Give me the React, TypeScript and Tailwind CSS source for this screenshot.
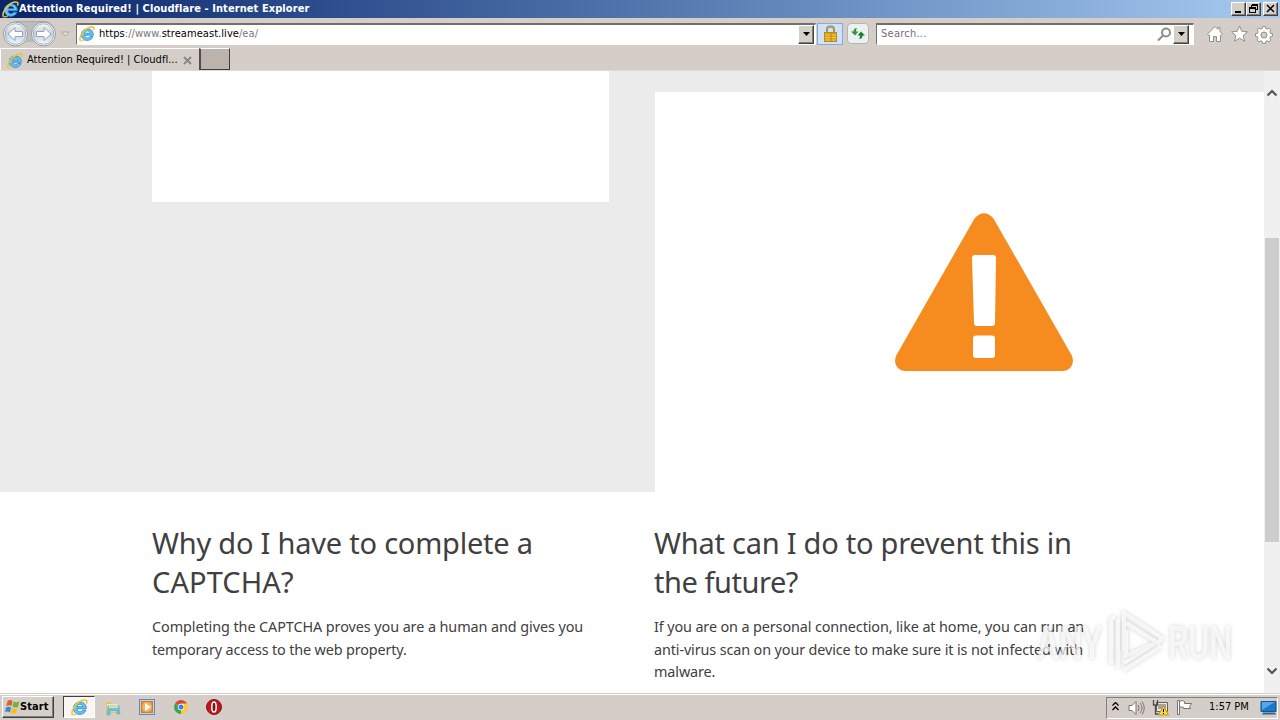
import type { ReactNode } from 'react';

const raised = 'border border-t-white border-l-white border-r-[#404040] border-b-[#404040] shadow-[inset_-1px_-1px_0_#808080] bg-[#d4d0c8]';

function IeIcon({ size = 16 }: { size?: number }) {
  return (
    <svg width={size} height={size} viewBox="0 0 16 16" className="shrink-0">
      <path d="M14.300 9.200H5.600c.1 3.300 4.200 3.600 5.300 1.400h3.100C12 16.300 2.300 15.600 2.300 8.700 2.300 1 15 .8 14.300 9.200zM5.700 7.200h5.500c-.2-3.100-5.200-3.100-5.500 0z" fill="#6cc4f2" stroke="#2688cb" strokeWidth=".8" />
      <path d="M1.500 14.800C-.8 12 4.500 3.200 11 1.200 14.300.2 15.700 1.600 14.500 4.300" fill="none" stroke="#edc52f" strokeWidth="1.500" />
      <path d="M1.500 14.800c1 .5 2.800-.2 4-1" fill="none" stroke="#f1cf49" strokeWidth="1.200" />
    </svg>
  );
}

function DropButton() {
  return (
    <div className={`flex h-[19px] w-4 shrink-0 items-center justify-center ${raised}`}>
      <svg width="7" height="4" viewBox="0 0 7 4"><path d="M0 0h7L3.500 4z" fill="#000" /></svg>
    </div>
  );
}

function WindowButton({ children }: { children: ReactNode }) {
  return (
    <div className={`flex h-[14px] w-[15px] items-center justify-center ${raised}`}>
      <svg width="11" height="10" viewBox="0 0 11 10" className="shrink-0" fill="none" stroke="#000" shapeRendering="crispEdges">{children}</svg>
    </div>
  );
}

function TitleBar() {
  return (
    <div className="flex h-[18px] shrink-0 items-center bg-linear-to-r from-[#0a246a] to-[#a6caf0] pl-[2px] pr-[2px]">
      <IeIcon size={17} />
      <span className="mt-[1px] whitespace-nowrap font-['DejaVu_Sans_Condensed','DejaVu_Sans',sans-serif] text-[11px] font-bold tracking-[0.080px] text-white">
        Attention Required! | Cloudflare - Internet Explorer
      </span>
      <div className="ml-auto flex">
        <WindowButton><path d="M2 7.500h6M2 8.500h6" /></WindowButton>
        <WindowButton><path d="M4 1.500h5M4 .5h5M3.500 1v2M9.500 0v6M8 5.500h1M1 3.500h6M1 4.500h6M1.500 4v5M7.500 3v6M1 8.500h6" /></WindowButton>
        <div className="ml-[2px]">
          <WindowButton><path d="M2 1l7 7M9 1L2 8" strokeWidth="1.500" shapeRendering="auto" /></WindowButton>
        </div>
      </div>
    </div>
  );
}

function NavButtons() {
  return (
    <svg width="74" height="30" viewBox="0 0 74 30" className="-my-1 shrink-0">
      <defs>
        <linearGradient id="orb" x1="0" y1="0" x2="0" y2="1">
          <stop offset="0" stopColor="#f5f7fa" />
          <stop offset=".5" stopColor="#c5cfdc" />
          <stop offset="1" stopColor="#eef9ff" />
        </linearGradient>
      </defs>
      <path d="M15 2.500h29c5 0 9 3 10 7" fill="none" stroke="#aaa7a4" />
      <path d="M16 3h28v22q-14-4-28 0z" fill="#bdbcbc" />
      {[15.500, 43.500].map((cx) => (
        <g key={cx}>
          <circle cx={cx} cy="15" r="12" fill="#f8f9fb" stroke="#92999f" />
          <circle cx={cx} cy="15" r="10.300" fill="url(#orb)" stroke="#9fb0c2" />
        </g>
      ))}
      <path d="M8 15l7-6.500v4h7.500v5H15v4z" fill="#fff" stroke="#98a3b0" />
      <path d="M51 15l-7-6.500v4h-7.500v5H44v4z" fill="#fff" stroke="#98a3b0" />
      <path d="M61.500 13h7.500L65.300 17z" fill="#e4e1de" stroke="#aaa6a2" />
    </svg>
  );
}

function Toolbar() {
  return (
    <div className="flex h-[30px] shrink-0 items-center pt-[1px]">
      <NavButtons />
      <div className="ml-[2px] flex h-[22px] w-[740px] items-center border border-t-2 border-[#716f6b] border-r-white border-b-white bg-white pl-[2px] pr-[1px] font-['DejaVu_Sans_Condensed','DejaVu_Sans',sans-serif] text-[11px]">
        <IeIcon />
        <span className="ml-[4px] whitespace-nowrap tracking-[0.060px] text-[#777]">
          <span className="text-black">https</span>://www.<span className="text-black">streameast.live</span>/ea/
        </span>
        <div className="ml-auto"><DropButton /></div>
      </div>
      <div className="ml-[1px] flex h-[22px] w-[26px] items-center justify-center border border-[#83acd8] bg-[#cfe2fa]">
        <svg width="15" height="17" viewBox="0 0 15 17">
          <path d="M4 8V4.500q0-3 3.500-3T11 4.500V8" fill="none" stroke="#897647" strokeWidth="2" />
          <path d="M4 8V4.500q0-3 3.500-3T11 4.500V8" fill="none" stroke="#d6c38d" strokeWidth=".8" />
          <rect x="1.500" y="7.500" width="12" height="9" fill="#d9a218" stroke="#b98a20" />
          <path d="M2 10h11M2 12.500h11M2 15h11" stroke="#f5c849" />
          <path d="M8 8v8" stroke="#bb8210" />
        </svg>
      </div>
      <div className="ml-1 flex h-[21px] w-[22px] items-center justify-center rounded-sm border border-[#b4b5b5] bg-[#edf0f0]">
        <svg width="16" height="15" viewBox="0 0 16 15" className="shrink-0">
          <path d="M7 2Q3.500 2 3.500 5.500H1L5 9.500l3.500-4H6Q6 3 7 2z" fill="#299b34" />
          <path d="M9 13q3.500 0 3.500-3.500H15L11 5.500 7.500 9.500H10Q10 12 9 13z" fill="#14802b" />
        </svg>
      </div>
      <div className="ml-[7px] flex h-[22px] w-[318px] items-center border border-t-2 border-[#716f6b] border-r-white border-b-white bg-white pl-1 pr-[4px] font-['DejaVu_Sans_Condensed','DejaVu_Sans',sans-serif] text-[11px] text-[#717171]">
        <span className="tracking-[0.250px]">Search...</span>
        <svg width="15" height="15" viewBox="0 0 15 15" className="ml-auto" fill="none" stroke="#8c8c8c" strokeWidth="2">
          <circle cx="9" cy="5.500" r="4" />
          <path d="M6 8.500L1 13.500" />
        </svg>
        <div className="ml-[1px]"><DropButton /></div>
      </div>
      <svg width="75" height="22" viewBox="0 0 75 22" className="mt-[1px] ml-[10px] shrink-0" fill="#fff" stroke="#928e8a">
        <path d="M3.500 11L11 3.500l3 3V4.500h2v4L18.500 11l-1.500 1.500-.5-.5v6.500h-4v-5h-3v5h-4V12l-.5.500z" />
        <path d="M35.500 3l2.300 5.300 5.700.5-4.300 3.800 1.300 5.600-5-3-5 3 1.300-5.600-4.300-3.800 5.700-.5z" />
        <path fillRule="evenodd" d="M58.600 3.500h2.800l.4 2 1.400.6 1.800-1.100 2 2-1.200 1.700.6 1.500 2 .4v2.800l-2 .4-.6 1.400 1.200 1.800-2 2-1.800-1.200-1.400.6-.4 2h-2.800l-.4-2-1.500-.6-1.700 1.200-2-2 1.100-1.800-.6-1.400-2-.4v-2.800l2-.4.6-1.500L53 7l2-2 1.700 1.100 1.500-.6zM60 9a3 3 0 100 6 3 3 0 000-6z" />
      </svg>
    </div>
  );
}

function TabRow() {
  return (
    <div className="flex h-[23px] shrink-0 border-b border-[#dedbd6]">
      <div className="flex w-[199px] items-center border-t border-l border-white pl-[6px] pt-[2px] font-['DejaVu_Sans_Condensed','DejaVu_Sans',sans-serif] text-[11px]">
        <IeIcon />
        <span className="ml-[4px] whitespace-nowrap tracking-[0.010px]">Attention Required! | Cloudfl...</span>
        <svg width="9" height="9" viewBox="0 0 9 9" className="ml-[5px] shrink-0"><path d="M1 1l7 7M8 1L1 8" stroke="#8c8783" strokeWidth="2" /></svg>
      </div>
      <div className="h-[22px] w-[31px] border border-t-white border-r-[#403c3a] border-b-[#403c3a] border-l-2 border-l-[#504c49] bg-[#bab3ae]" />
    </div>
  );
}

function WarningIcon() {
  return (
    <svg width="178" height="158" viewBox="0 0 178 158">
      <path d="M79.500 5.500Q89-5 98.500 5.500L176.500 142c4 8-1 16-9 16H10.500c-8 0-13-8-9-16z" fill="#f68b1f" />
      <path d="M80 42h18q3 0 3 3l-1 65q0 3-3 3H82q-3 0-3-3l-2-65q0-3 3-3z" fill="#fff" />
      <rect x="78" y="122.500" width="22" height="22.500" rx="3" fill="#fff" />
    </svg>
  );
}

function ScrollBar() {
  return (
    <div className="flex w-4 shrink-0 flex-col items-center bg-[#f0f0f0] pt-[18px] pb-[18px]">
      <svg width="12" height="8" viewBox="0 0 12 8"><path d="M1.500 6.500L6 2l4.500 4.500" fill="none" stroke="#555" strokeWidth="2.200" /></svg>
      <div className="mt-[141px] h-[304px] w-[14px] bg-[#cdcdcd]" />
      <svg width="12" height="8" viewBox="0 0 12 8" className="mt-auto"><path d="M1.500 1.500L6 6l4.500-4.500" fill="none" stroke="#555" strokeWidth="2.200" /></svg>
    </div>
  );
}

function Page() {
  return (
    <div className="flex h-[622px] shrink-0 overflow-hidden bg-white">
      <main className="flex-1 font-['Noto_Sans',sans-serif] text-[#404040]">
        <div className="flex h-[421px] bg-[#ebebeb] pl-[152px]">
          <div className="h-[131px] w-[457px] bg-white" />
          <div className="mt-[21px] ml-[46px] flex flex-1 bg-white pt-[121px] pl-[240px]">
            <WarningIcon />
          </div>
        </div>
        <div className="flex pl-[152px] pt-[31px]">
          <section className="w-[502px]">
            <h2 className="text-[29px] leading-[39px] tracking-[-0.220px]">
              <span className="block whitespace-nowrap">Why do I have to complete a</span>
              <span className="block whitespace-nowrap tracking-[0.100px]">CAPTCHA?</span>
            </h2>
            <p className="mt-[15px] text-[14.400px] leading-[22.500px] tracking-[-0.080px]">
              <span className="block whitespace-nowrap">Completing the CAPTCHA proves you are a human and gives you</span>
              <span className="block whitespace-nowrap tracking-[-0.150px]">temporary access to the web property.</span>
            </p>
          </section>
          <section>
            <h2 className="text-[29px] leading-[39px] tracking-[-0.240px]">
              <span className="block whitespace-nowrap">What can I do to prevent this in</span>
              <span className="block whitespace-nowrap tracking-[-0.450px]">the future?</span>
            </h2>
            <p className="mt-[15px] text-[14.400px] leading-[22.500px] tracking-[-0.120px]">
              <span className="block whitespace-nowrap">If you are on a personal connection, like at home, you can run an</span>
              <span className="block whitespace-nowrap">anti-virus scan on your device to make sure it is not infected with</span>
              <span className="block whitespace-nowrap">malware.</span>
            </p>
          </section>
        </div>
      </main>
      <ScrollBar />
    </div>
  );
}

function Watermark() {
  return (
    <div className="absolute top-[606px] left-[1037px] flex h-[70px] w-[200px] items-center font-['Roboto',sans-serif] text-[46px] leading-none text-white/70 drop-shadow-[0_0_2px_rgba(0,0,0,0.25)]">
      <span className="mt-[3px] w-[69px] shrink-0 origin-left scale-x-[0.720] font-medium">ANY</span>
      <svg width="60" height="66" viewBox="0 0 60 66" className="mr-[2px] shrink-0" fill="none" stroke="#fff" strokeOpacity=".7" strokeWidth="4">
        <path d="M5 56V13q0-3 4-4M12 60V11M18 43V5l38 25-4 5-32-20M20 22v26l34-15M18 55l37-23M18 62l37-24" />
      </svg>
      <span className="mt-[3px] shrink-0 origin-left scale-x-[0.700] font-medium">RUN</span>
    </div>
  );
}

function Taskbar() {
  return (
    <div className="flex h-[27px] shrink-0 items-center border-t border-[#d4d0c8] bg-[#d5cec8] pl-[2px] pr-[2px] font-['DejaVu_Sans_Condensed','DejaVu_Sans',sans-serif] text-[11px] shadow-[inset_0_1px_0_#fff]">
      <div className={`flex h-[22px] w-[52px] items-center pl-[1px] ${raised}`}>
        <svg width="17" height="16" viewBox="0 0 16 16" className="shrink-0">
          <path d="M3 2q3-2 5 0L7 7Q5 5.500 2 7z" fill="#eb582b" />
          <path d="M9 2.500q3 1.500 6 0L13.500 8q-3 1-5.500-.5z" fill="#72b43b" />
          <path d="M1.500 8.500Q4 7 6.500 8.500l-1 5Q3 12 .5 13z" fill="#3a86d0" />
          <path d="M7.500 9q3 1.500 5.500 0l-1.500 5q-2.500 1.500-5 0z" fill="#f5bc24" />
        </svg>
        <span className="-ml-[1px] font-bold tracking-[0.100px]">Start</span>
      </div>
      <div className="ml-[9px] flex h-[22px] w-[32px] items-center justify-center border border-t-[#404040] border-l-[#404040] border-white bg-[#f7f6f4]">
        <IeIcon size={17} />
      </div>
      <svg width="16" height="16" viewBox="0 0 16 16" className="mt-[2px] ml-[10px]">
        <path d="M1 2h5l1 2h7v9H1z" fill="#e4c368" />
        <path d="M2 4h11v8H2z" fill="#f8e9a4" />
        <path d="M3 6h11l1 8h-3v-3H5v4H2z" fill="#77bed5" stroke="#529fb9" strokeWidth=".5" />
        <path d="M4 7h9" stroke="#d3f0f5" strokeWidth="1.500" />
      </svg>
      <svg width="16" height="16" viewBox="0 0 16 16" className="ml-[18px]">
        <rect x=".5" y=".5" width="15" height="15" fill="#b6d7f1" stroke="#568fc8" />
        <rect x="2.500" y="2.500" width="11" height="11" fill="#f58b20" stroke="#e67716" />
        <circle cx="8" cy="8" r="5" fill="#fff" fillOpacity=".3" />
        <path d="M6 4l6 4-6 4z" fill="#fff" />
      </svg>
      <svg width="14" height="14" viewBox="0 0 14 14" className="ml-[19px]">
        <path d="M7 7L1 3.500A7 7 0 0113 3.500z" fill="#e34437" />
        <path d="M7 7v7A7 7 0 0013 3.500H7z" fill="#f9cc31" />
        <path d="M7 7v7A7 7 0 011 3.500z" fill="#35a755" />
        <circle cx="7" cy="7" r="3.200" fill="#fff" /><circle cx="7" cy="7" r="2.500" fill="#3e80df" />
      </svg>
      <svg width="16" height="16" viewBox="0 0 16 16" className="ml-[18px]">
        <circle cx="8" cy="8" r="7.500" fill="#bd1720" stroke="#8f1218" />
        <ellipse cx="8" cy="8" rx="2.200" ry="5" fill="#7d1518" stroke="#fff" strokeWidth="1.500" />
      </svg>
      <div className="mt-[1px] ml-auto flex h-[22px] w-[172px] items-center border border-[#808080] border-r-white border-b-white pl-[5px]">
        <svg width="7" height="9" viewBox="0 0 7 9" className="-mt-[3px]" fill="none" stroke="#000" strokeWidth="1.300"><path d="M.5 3.500l3-3 3 3M.5 8l3-3 3 3" /></svg>
        <svg width="17" height="16" viewBox="0 0 17 16" className="ml-[9px]" fill="none" stroke="#77736f">
          <path d="M1 5.500h3l4-4v13l-4-4H1z" fill="#fff" /><path d="M10 5q2 3 0 6M12 3q4 5 0 10M14 1.500q4.500 6.500 0 13" />
        </svg>
        <svg width="17" height="17" viewBox="0 0 17 17" className="ml-[7px]">
          <path d="M4.500 3.500h11v9h-11z" fill="#ece9e6" stroke="#66615c" />
          <path d="M6 5h8v5H6z" fill="#a6a29e" />
          <path d="M1.500 1v5h4V1M3.500 6v9h3" fill="none" stroke="#4f4b47" strokeWidth="1.300" />
          <path d="M11.500 7l5 9h-10z" fill="#ffdc29" stroke="#bd9914" /><path d="M11.500 10v3M11.500 14v1" stroke="#000" />
        </svg>
        <svg width="17" height="16" viewBox="0 0 17 16" className="-mt-[2px] ml-[7px]" fill="#fff" stroke="#77726d">
          <path d="M1.500 1.500h2v14h-2zM3.500 2.500q3-2 5 0v2h7l-2 3 1 2h-7v-1q-2-1-4 0z" />
        </svg>
        <span className="ml-[16px] whitespace-nowrap">1:57 PM</span>
        <svg width="17" height="16" viewBox="0 0 17 16" className="ml-auto">
          <path d="M1 1.500h15v10H1z" fill="#1979c9" stroke="#12539f" /><path d="M2 2h13L2 10z" fill="#55a8e5" /><path d="M3 12.500h12l1 2H2z" fill="#3e627e" />
        </svg>
      </div>
    </div>
  );
}

export default function App() {
  return (
    <div className="relative flex h-[720px] w-[1280px] flex-col overflow-hidden bg-[#d5cec8] text-black">
      <TitleBar />
      <Toolbar />
      <TabRow />
      <Page />
      <Taskbar />
      <Watermark />
    </div>
  );
}
